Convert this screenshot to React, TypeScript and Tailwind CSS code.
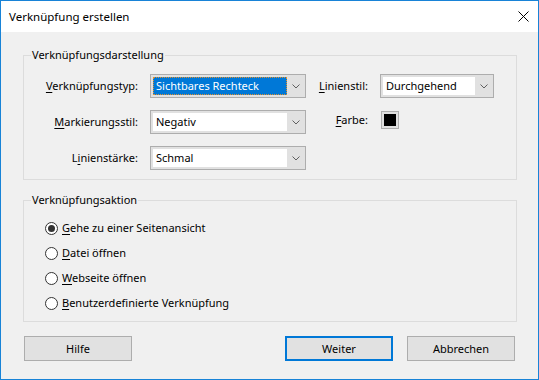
import React from "react";

const font = { fontFamily: '"Segoe UI", "Noto Sans", sans-serif' };

function Chevron() {
  return (
    <svg width="8" height="5" viewBox="0 0 8 5" className="block">
      <polyline points="0.5,0.5 4,4 7.5,0.5" fill="none" stroke="#606060" strokeWidth="1" />
    </svg>
  );
}

function Combo({
  value,
  width,
  selected = false,
}: {
  value: string;
  width: string;
  selected?: boolean;
}) {
  return (
    <div className={`${width} h-[24px] flex border border-[#adadad] bg-[#e1e1e1] p-[2px] pr-0`}>
      {selected ? (
        <div className="flex-1 flex items-center bg-[#0078d7] border border-dotted border-[#e0902c] pl-[2px] text-white">
          {value}
        </div>
      ) : (
        <div className="flex-1 flex items-center bg-white pl-[3px] text-black">{value}</div>
      )}
      <div className="w-[18px] flex items-center justify-center">
        <Chevron />
      </div>
    </div>
  );
}

function Label({ pre = "", acc, post, width }: { pre?: string; acc: string; post: string; width: string }) {
  return (
    <div className={`${width} text-right shrink-0`}>
      {pre}
      <span className="underline underline-offset-2">{acc}</span>
      {post}
    </div>
  );
}

function Radio({ acc, post, checked = false }: { acc: string; post: string; checked?: boolean }) {
  return (
    <div className="flex items-center h-[16px]">
      <div className="w-[13px] h-[13px] rounded-full border border-[#333333] bg-white flex items-center justify-center">
        {checked && <div className="w-[7px] h-[7px] rounded-full bg-[#333333]" />}
      </div>
      <div className="ml-[4px]">
        <span className="underline underline-offset-2">{acc}</span>
        {post}
      </div>
    </div>
  );
}

export default function App() {
  return (
    <div
      className="w-[539px] h-[380px] border border-[#1883d7] bg-[#f0f0f0] flex flex-col text-[11px] leading-[16px] text-black"
      style={font}
    >
      <div className="h-[31px] shrink-0 bg-white flex items-center justify-between pl-[8px] pr-[9px]">
        <span className="text-[11.5px]">Verknüpfung erstellen</span>
        <svg width="11" height="11" viewBox="0 0 11 11">
          <path d="M0.5 0.5 L10.5 10.5 M10.5 0.5 L0.5 10.5" stroke="#000" strokeWidth="1" />
        </svg>
      </div>

      <div className="pl-[22px] pt-[23px]">
        {/* Verknüpfungsdarstellung */}
        <div className="relative w-[494px] border border-[#dcdcdc] pt-[18px] pb-[9px] flex flex-col gap-[12px]">
          <span className="absolute left-[7px] top-[-9px] px-[1px] bg-[#f0f0f0]">Verknüpfungsdarstellung</span>

          <div className="flex items-start">
            <div className="h-[24px] flex items-center">
              <Label acc="V" post="erknüpfungstyp:" width="w-[114px]" />
            </div>
            <div className="ml-[12px]">
              <Combo value="Sichtbares Rechteck" width="w-[156px]" selected />
            </div>
            <div className="h-[24px] flex items-center">
              <Label acc="L" post="inienstil:" width="w-[62px]" />
            </div>
            <div className="ml-[12px]">
              <Combo value="Durchgehend" width="w-[114px]" />
            </div>
          </div>

          <div className="flex items-start">
            <div className="h-[24px] flex items-center">
              <Label acc="M" post="arkierungsstil:" width="w-[114px]" />
            </div>
            <div className="ml-[12px]">
              <Combo value="Negativ" width="w-[156px]" />
            </div>
            <div className="h-[20px] flex items-center">
              <Label acc="F" post="arbe:" width="w-[62px]" />
              <div className="ml-[13px] w-[18px] h-[18px] border border-[#adadad] bg-[#e1e1e1] p-[2px]">
                <div className="w-full h-full bg-black" />
              </div>
            </div>
          </div>

          <div className="flex items-start">
            <div className="h-[24px] flex items-center">
              <Label pre="L" acc="i" post="nienstärke:" width="w-[114px]" />
            </div>
            <div className="ml-[12px]">
              <Combo value="Schmal" width="w-[156px]" />
            </div>
          </div>
        </div>

        {/* Verknüpfungsaktion */}
        <div className="relative mt-[20px] w-[494px] border border-[#dcdcdc] pt-[19px] pb-[10px] pl-[21px] flex flex-col gap-[9px]">
          <span className="absolute left-[7px] top-[-9px] px-[1px] bg-[#f0f0f0]">Verknüpfungsaktion</span>
          <Radio acc="G" post="ehe zu einer Seitenansicht" checked />
          <Radio acc="D" post="atei öffnen" />
          <Radio acc="W" post="ebseite öffnen" />
          <Radio acc="B" post="enutzerdefinierte Verknüpfung" />
        </div>

        <div className="mt-[14px] w-[494px] flex items-center pl-[1px]">
          <button className="w-[108px] h-[25px] border border-[#adadad] bg-[#e1e1e1]">Hilfe</button>
          <button className="ml-auto w-[108px] h-[25px] border-2 border-[#0078d7] bg-[#e1e1e1]">Weiter</button>
          <button className="ml-[14px] mr-[2px] w-[108px] h-[25px] border border-[#adadad] bg-[#e1e1e1]">Abbrechen</button>
        </div>
      </div>
    </div>
  );
}
